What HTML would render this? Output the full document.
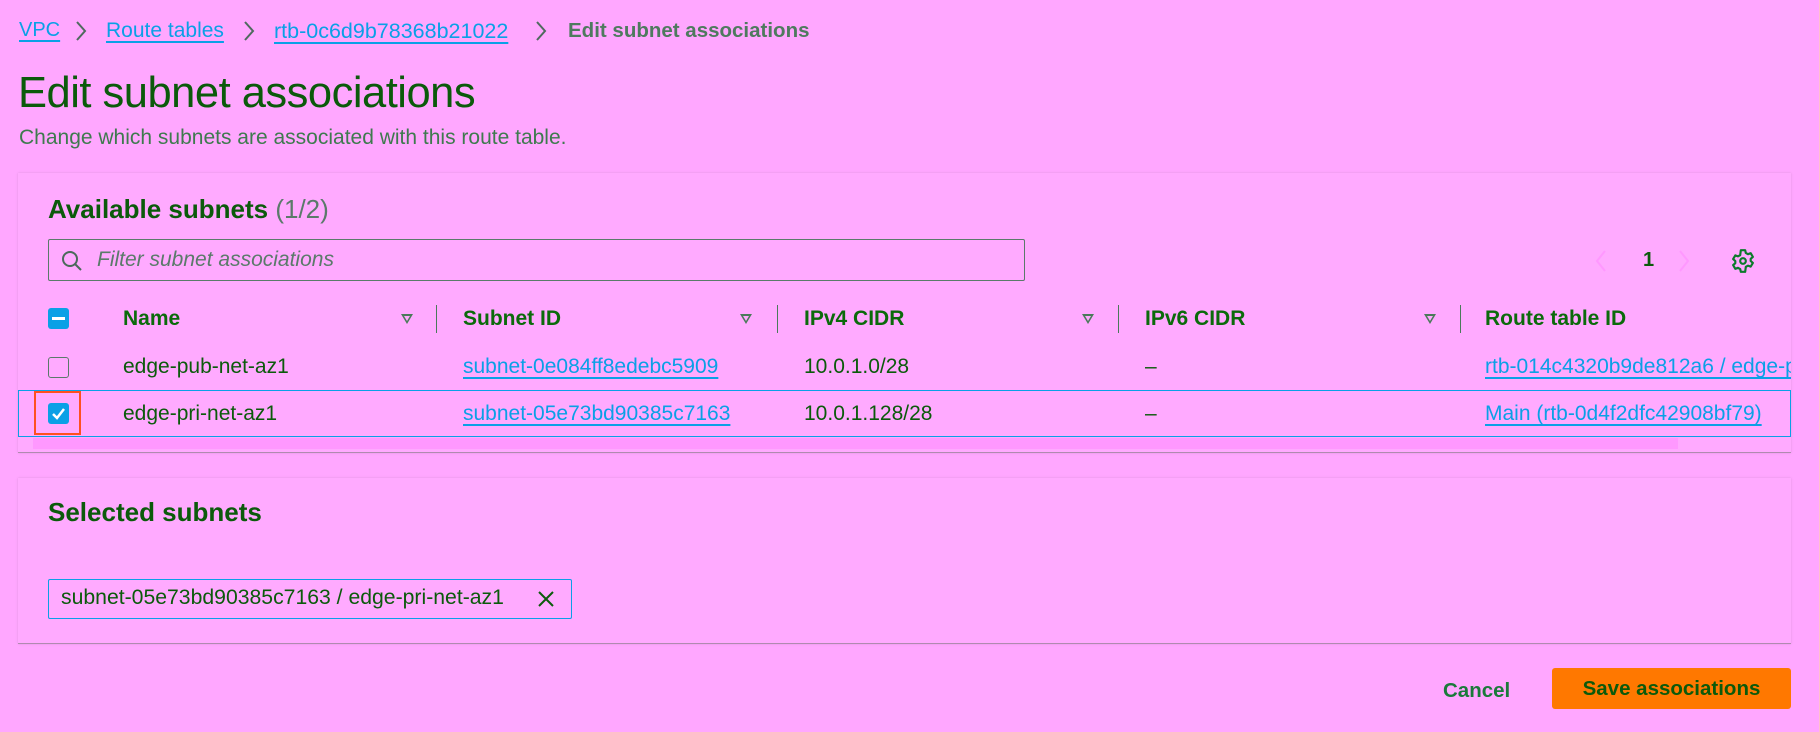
<!DOCTYPE html>
<html><head><meta charset="utf-8"><style>
*{box-sizing:border-box;margin:0;padding:0}
body{width:1819px;height:732px;background:#ffa7ff;font-family:"Liberation Sans",sans-serif;color:#0b6a0b;position:relative;overflow:hidden}
.a{position:absolute;white-space:nowrap}
.lnk{color:#0aa0e6;text-decoration:underline;text-decoration-thickness:2px;text-underline-offset:4px}
.card{position:absolute;background:#ffaaff;border-bottom:1px solid #b08ab0;box-shadow:0 0 2px rgba(150,100,150,.3)}
.th{font-weight:bold;font-size:21px;color:#0b6a0b}
.td{font-size:21px;color:#0b5a0b}
.sort{position:absolute;width:0;height:0;border-left:6px solid transparent;border-right:6px solid transparent;border-top:10px solid #4a7a5a}
.sort:after{content:"";position:absolute;left:-3px;top:-8px;border-left:3px solid transparent;border-right:3px solid transparent;border-top:5px solid #ffaaff}
.div{position:absolute;width:1px;height:28px;background:#4a7a5a}
</style></head><body>
<div class="a" style="left:19px;top:19px;font-size:20px"><span class="lnk">VPC</span></div>
<div class="a" style="left:106px;top:19px;font-size:21px"><span class="lnk">Route tables</span></div>
<div class="a" style="left:274px;top:19px;font-size:21.5px"><span class="lnk">rtb-0c6d9b78368b21022</span></div>
<div class="a" style="left:568px;top:19px;font-size:20.5px;font-weight:bold;color:#4e7a5e">Edit subnet associations</div>
<svg class="a" style="left:74px;top:20px" width="14" height="22"><path d="M3 2l8 9-8 9" stroke="#4e6a5e" stroke-width="2" fill="none"/></svg>
<svg class="a" style="left:242px;top:20px" width="14" height="22"><path d="M3 2l8 9-8 9" stroke="#4e6a5e" stroke-width="2" fill="none"/></svg>
<svg class="a" style="left:534px;top:20px" width="14" height="22"><path d="M3 2l8 9-8 9" stroke="#4e6a5e" stroke-width="2" fill="none"/></svg>
<div class="a" style="left:18px;top:69px;font-size:43.5px;color:#0b5a0b;letter-spacing:-0.5px">Edit subnet associations</div>
<div class="a" style="left:19px;top:126px;font-size:21px;color:#3e7a4e">Change which subnets are associated with this route table.</div>

<div class="card" style="left:18px;top:173px;width:1773px;height:280px"></div>
<div class="a" style="left:48px;top:194px;font-size:26px;font-weight:bold;color:#0b5a0b">Available subnets <span style="font-weight:normal;color:#5a7a6a">(1/2)</span></div>
<div class="a" style="left:48px;top:239px;width:977px;height:42px;border:1px solid #5a7a6a;border-radius:2px"></div>
<svg class="a" style="left:60px;top:249px" width="24" height="24"><circle cx="10" cy="10" r="7" stroke="#4a6a5a" stroke-width="2" fill="none"/><path d="M15 15l6 6" stroke="#4a6a5a" stroke-width="2"/></svg>
<div class="a" style="left:97px;top:248px;font-size:21px;font-style:italic;color:#5a7a6a">Filter subnet associations</div>
<svg class="a" style="left:1593px;top:248px" width="16" height="26"><path d="M12 3L4 13l8 10" stroke="#ff98ff" stroke-width="2" fill="none"/></svg>
<div class="a" style="left:1643px;top:249px;font-size:20px;font-weight:bold;color:#0b5a0b">1</div>
<svg class="a" style="left:1676px;top:248px" width="16" height="26"><path d="M4 3l8 10-8 10" stroke="#ff98ff" stroke-width="2" fill="none"/></svg>
<svg class="a" style="left:1730px;top:248px" width="26" height="26" viewBox="0 0 24 24"><path d="M10 2h4l.6 2.6 2 1.1 2.5-.9 2 3.4-2 1.8v2l2 1.8-2 3.4-2.5-.9-2 1.1L14 22h-4l-.6-2.6-2-1.1-2.5.9-2-3.4 2-1.8v-2l-2-1.8 2-3.4 2.5.9 2-1.1z" stroke="#0b7a2b" stroke-width="2" fill="none" stroke-linejoin="round"/><circle cx="12" cy="12" r="2.6" stroke="#0b7a2b" stroke-width="2" fill="none"/></svg>

<div class="a" style="left:48px;top:308px;width:21px;height:21px;background:#0aa0e6;border-radius:3px"><div style="position:absolute;left:4px;top:9px;width:13px;height:3px;background:#fff"></div></div>
<div class="a th" style="left:123px;top:307px">Name</div>
<div class="sort" style="left:401px;top:314px"></div><div class="div" style="left:436px;top:305px"></div>
<div class="a th" style="left:463px;top:307px">Subnet ID</div>
<div class="sort" style="left:740px;top:314px"></div><div class="div" style="left:777px;top:305px"></div>
<div class="a th" style="left:804px;top:307px">IPv4 CIDR</div>
<div class="sort" style="left:1082px;top:314px"></div><div class="div" style="left:1118px;top:305px"></div>
<div class="a th" style="left:1145px;top:307px">IPv6 CIDR</div>
<div class="sort" style="left:1424px;top:314px"></div><div class="div" style="left:1460px;top:305px"></div>
<div class="a th" style="left:1485px;top:307px">Route table ID</div>

<div class="a" style="left:48px;top:357px;width:21px;height:21px;border:1px solid #5a7a6a;border-radius:3px"></div>
<div class="a td" style="left:123px;top:355px">edge-pub-net-az1</div>
<div class="a td" style="left:463px;top:355px"><span class="lnk">subnet-0e084ff8edebc5909</span></div>
<div class="a td" style="left:804px;top:355px">10.0.1.0/28</div>
<div class="a td" style="left:1145px;top:355px">–</div>
<div class="a td" style="left:1485px;top:355px;width:306px;overflow:hidden;height:30px"><span class="lnk">rtb-014c4320b9de812a6 / edge-pub</span></div>

<div class="a" style="left:18px;top:390px;width:1773px;height:47px;border:1px solid #0aa0e6"></div>
<div class="a" style="left:34px;top:391px;width:47px;height:44px;border:2px solid #ff5020"></div>
<div class="a" style="left:48px;top:403px;width:21px;height:21px;background:#0aa0e6;border-radius:3px"><svg width="21" height="21" style="position:absolute;left:0;top:0"><path d="M5 11l4 4 7-9" stroke="#fff" stroke-width="2.5" fill="none"/></svg></div>
<div class="a td" style="left:123px;top:402px">edge-pri-net-az1</div>
<div class="a td" style="left:463px;top:402px"><span class="lnk">subnet-05e73bd90385c7163</span></div>
<div class="a td" style="left:804px;top:402px">10.0.1.128/28</div>
<div class="a td" style="left:1145px;top:402px">–</div>
<div class="a td" style="left:1485px;top:402px"><span class="lnk">Main (rtb-0d4f2dfc42908bf79)</span></div>
<div class="a" style="left:33px;top:438px;width:1645px;height:11px;background:#ff98ff"></div>

<div class="card" style="left:18px;top:478px;width:1773px;height:166px"></div>
<div class="a" style="left:48px;top:497px;font-size:26px;font-weight:bold;color:#0b5a0b">Selected subnets</div>
<div class="a" style="left:48px;top:579px;width:524px;height:40px;border:1px solid #0aa0e6;border-radius:2px"></div>
<div class="a td" style="left:61px;top:586px;font-size:21.2px">subnet-05e73bd90385c7163 / edge-pri-net-az1</div>
<svg class="a" style="left:536px;top:589px" width="20" height="20"><path d="M3 3l14 14M17 3L3 17" stroke="#0b5a0b" stroke-width="2"/></svg>

<div class="a" style="left:1443px;top:679px;font-size:20.5px;font-weight:bold;color:#1a7a3a">Cancel</div>
<div class="a" style="left:1552px;top:668px;width:239px;height:41px;background:#ff7800;border-radius:3px;font-size:20.5px;font-weight:bold;color:#0b5a0b;text-align:center;line-height:41px">Save associations</div>
</body></html>
